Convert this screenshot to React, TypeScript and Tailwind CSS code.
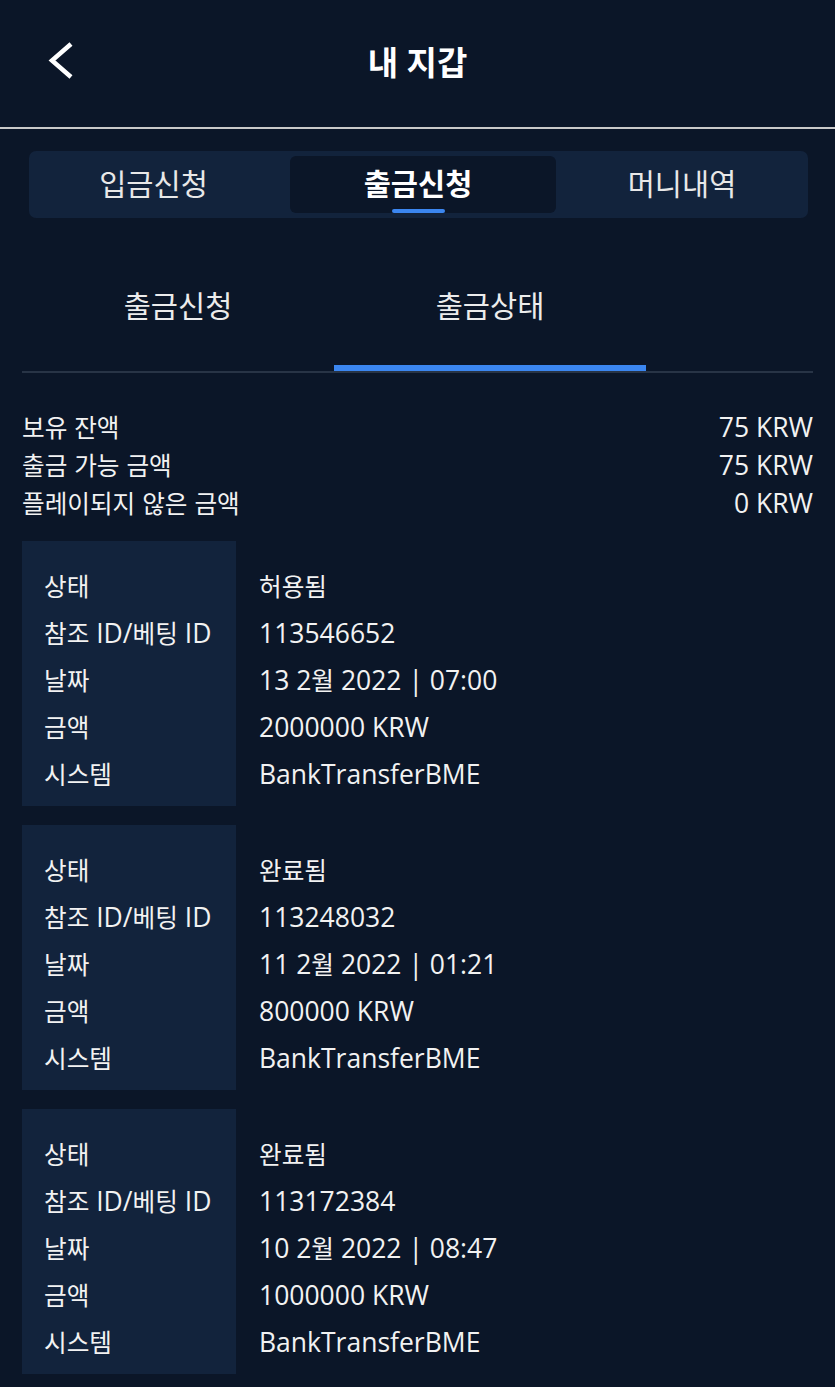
import { useState } from 'react';

type Withdrawal = {
  status: string;
  refId: string;
  date: string;
  amount: string;
  system: string;
};

const withdrawals: Withdrawal[] = [
  { status: '허용됨', refId: '113546652', date: '13 2월 2022 | 07:00', amount: '2000000 KRW', system: 'BankTransferBME' },
  { status: '완료됨', refId: '113248032', date: '11 2월 2022 | 01:21', amount: '800000 KRW', system: 'BankTransferBME' },
  { status: '완료됨', refId: '113172384', date: '10 2월 2022 | 08:47', amount: '1000000 KRW', system: 'BankTransferBME' },
];

const balances = [
  { label: '보유 잔액', value: '75 KRW' },
  { label: '출금 가능 금액', value: '75 KRW' },
  { label: '플레이되지 않은 금액', value: '0 KRW' },
];

// hangul runs get their own size so they sit next to Open Sans like the original
function Txt({ text }: { text: string }) {
  const parts = text.split(/([\uAC00-\uD7A3]+)/);
  return (
    <span className="whitespace-pre">
      {parts.map((p, i) =>
        /[\uAC00-\uD7A3]/.test(p) ? (
          <span key={i} className="text-[0.93em]">{p}</span>
        ) : (
          <span key={i}>{p}</span>
        )
      )}
    </span>
  );
}

export default function App() {
  const [mainTab, setMainTab] = useState(1);
  const [subTab, setSubTab] = useState(1);

  const rows = (w: Withdrawal) => [
    { label: '상태', value: w.status },
    { label: '참조 ID/베팅 ID', value: w.refId },
    { label: '날짜', value: w.date },
    { label: '금액', value: w.amount },
    { label: '시스템', value: w.system },
  ];

  return (
    <div className="min-h-screen bg-[#0b1628] text-[#f2f2f2] font-['Open_Sans','Noto_Sans_CJK_KR',sans-serif] pb-4">
      {/* header */}
      <div className="grid grid-cols-[100px_1fr_100px] items-center h-[127px]">
        <button className="ml-[46px] mb-[7px] w-[30px] h-[40px]">
          <svg width="30" height="40" viewBox="0 0 30 40" fill="none">
            <polyline points="25,4 6,20.5 25,37" stroke="#ffffff" strokeWidth="4.5" strokeLinejoin="miter" />
          </svg>
        </button>
        <h1 className="text-center text-[33px] leading-none mb-[3px] font-bold text-white">내 지갑</h1>
        <div />
      </div>
      <div className="h-[2px] bg-[#c9c9c9]" />

      {/* main tabs */}
      <div className="mt-[22px] ml-[29px] w-[779px] h-[67px] bg-[#12233c] rounded-[7px] flex py-[5px]">
        {['입금신청', '출금신청', '머니내역'].map((t, i) => (
          <button
            key={t}
            onClick={() => setMainTab(i)}
            className={`relative flex items-center justify-center text-[29.5px] rounded-[6px] ${
              i === 0 ? 'w-[261px] pr-[12px]' : i === 1 ? 'w-[266px] pr-[10px]' : 'flex-1'
            } ${mainTab === i ? 'bg-[#0b1628] font-bold text-white' : 'text-[#e8e8e8]'}`}
          >
            {t}
            {mainTab === i && (
              <span className="absolute bottom-0 left-[102px] w-[53px] h-[4px] rounded-full bg-[#3b86f0]" />
            )}
          </button>
        ))}
      </div>

      {/* sub tabs */}
      <div className="mx-[22px] mt-[22px]">
        <div className="flex">
          {['출금신청', '출금상태'].map((t, i) => (
            <button key={t} onClick={() => setSubTab(i)} className="w-[312px] h-[131px] flex flex-col">
              <span className="flex-1 flex items-center justify-center pt-[8px] text-[29.5px] text-[#ececec]">{t}</span>
              <span className={`h-[6px] ${subTab === i ? 'bg-[#3b86f0]' : 'bg-transparent'}`} />
            </button>
          ))}
        </div>
        <div className="h-[2px] bg-[#283446]" />

        {/* balances */}
        <div className="mt-[36px] text-[26.5px]">
          {balances.map((b) => (
            <div key={b.label} className="flex justify-between items-center h-[38px]">
              <Txt text={b.label} />
              <span>{b.value}</span>
            </div>
          ))}
        </div>

        {/* withdrawal cards */}
        <div className="mt-[18px] flex flex-col gap-[19px]">
          {withdrawals.map((w) => (
            <div key={w.refId} className="flex text-[26.5px]">
              <div className="w-[214px] bg-[#12233c] pt-[22px] pb-[8px] pl-[22px]">
                {rows(w).map((r) => (
                  <div key={r.label} className="h-[47px] flex items-center whitespace-nowrap">
                    <Txt text={r.label} />
                  </div>
                ))}
              </div>
              <div className="flex-1 pt-[22px] pb-[8px] pl-[23px]">
                {rows(w).map((r) => (
                  <div key={r.label} className="h-[47px] flex items-center whitespace-nowrap">
                    <Txt text={r.value} />
                  </div>
                ))}
              </div>
            </div>
          ))}
        </div>
      </div>
    </div>
  );
}
